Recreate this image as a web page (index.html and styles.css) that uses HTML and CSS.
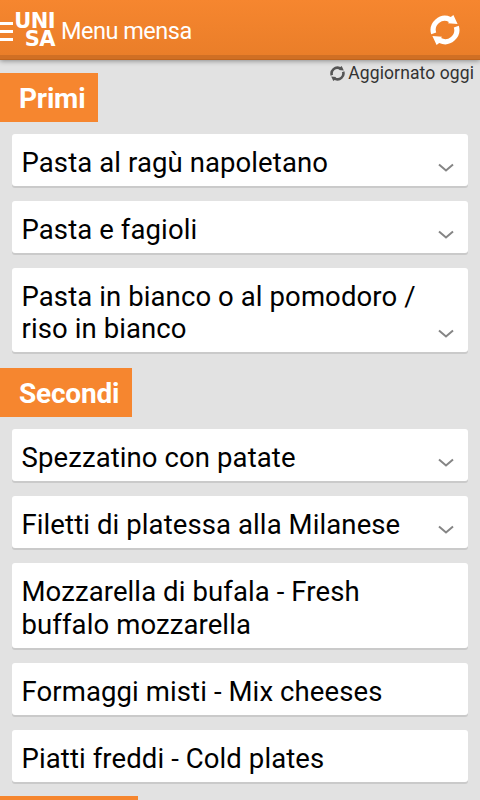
FILE: index.html
```html
<!DOCTYPE html>
<html lang="it">
<head>
<meta charset="utf-8">
<title>Menu mensa</title>
<link rel="stylesheet" href="styles.css">
</head>
<body>
<svg class="defs" aria-hidden="true">
  <symbol id="sync" viewBox="0 0 30 30">
    <path d="M1.2 19.3A14.4 14.4 0 0 1 20.8 2L23.4 0 27.6 9 18 8.2 18.9 6.9A9 9 0 0 0 6.2 17.6Z"/>
    <path d="M28.8 10.7A14.4 14.4 0 0 1 9.2 28L6.6 30 2.4 21 12 21.8 11.1 23.1A9 9 0 0 0 23.8 12.4Z"/>
  </symbol>
  <symbol id="chevron" viewBox="0 0 16 10">
    <path d="M1 1.5 8 7.5 15 1.5" fill="none" stroke="#858585" stroke-width="2"/>
  </symbol>
</svg>
<header class="bar">
  <div class="drawer"><i></i><i></i><i></i></div>
  <div class="logo"><span>UNI</span><span>SA</span></div>
  <h1 class="title">Menu mensa</h1>
  <svg class="refresh"><use href="#sync"/></svg>
</header>
<main class="content">
  <div class="updated"><svg><use href="#sync"/></svg><span>Aggiornato oggi</span></div>
  <h2 class="tag primi"><span>Primi</span></h2>
  <ul class="list">
    <li class="card"><span>Pasta al ragù napoletano</span><svg><use href="#chevron"/></svg></li>
    <li class="card"><span>Pasta e fagioli</span><svg><use href="#chevron"/></svg></li>
    <li class="card"><span>Pasta in bianco o al pomodoro /<br>riso in bianco</span><svg><use href="#chevron"/></svg></li>
  </ul>
  <h2 class="tag secondi"><span>Secondi</span></h2>
  <ul class="list">
    <li class="card"><span>Spezzatino con patate</span><svg><use href="#chevron"/></svg></li>
    <li class="card"><span>Filetti di platessa alla Milanese</span><svg><use href="#chevron"/></svg></li>
    <li class="card"><span>Mozzarella di bufala - Fresh<br>buffalo mozzarella</span></li>
    <li class="card"><span>Formaggi misti - Mix cheeses</span></li>
    <li class="card"><span>Piatti freddi - Cold plates</span></li>
  </ul>
  <div class="tag next"></div>
</main>
</body>
</html>
```
FILE: styles.css
```css
* { box-sizing: border-box; }
body {
  margin: 0;
  height: 800px;
  overflow: hidden;
  display: flex;
  flex-direction: column;
  background: #e2e2e2;
  font-family: Roboto, sans-serif;
  color: #000;
}
.defs { display: none; }
.bar {
  position: relative;
  flex: none;
  height: 60px;
  display: flex;
  align-items: center;
  background: linear-gradient(#f6862f, #ea7e29 55px, #d06f24 55px, #d06f24 59px, #c0631b 59px);
  box-shadow: 0 1px 5px rgba(0, 0, 0, .4);
  color: #fff;
}
.drawer { width: 13px; display: grid; gap: 5px; padding-top: 2px; }
.drawer i { height: 3px; background: #fff; }
.logo {
  width: 43px;
  display: flex;
  flex-direction: column;
  align-items: flex-end;
  padding: 0 1px 1px 0;
  font: bold 21px/18px "DejaVu Sans", sans-serif;
  letter-spacing: -.6px;
}
.title { margin: 2px 0 0 5px; font-size: 23.5px; line-height: 30px; font-weight: 400; letter-spacing: -.5px; white-space: nowrap; }
.refresh { width: 30px; height: 30px; margin-left: auto; margin-right: 20px; fill: #fff; }
.content { flex: 1; min-height: 0; overflow: hidden; }
.updated {
  height: 12.5px;
  padding-right: 6px;
  display: flex;
  justify-content: flex-end;
  gap: 3px;
  font-size: 17.5px;
  line-height: 26px;
  letter-spacing: .1px;
  color: #333;
  white-space: nowrap;
}
.updated svg { width: 15px; height: 15px; margin-top: 6px; fill: #555; }
.tag {
  margin: 0;
  height: 49px;
  padding-left: 19px;
  background: #f6862f;
  color: #fff;
  font-size: 28px;
  line-height: 51px;
  font-weight: 700;
  letter-spacing: -.2px;
}
.primi { width: 98px; }
.secondi { width: 132px; margin-top: 15.3px; }
.next { width: 138px; margin-top: 14.8px; }
.list { list-style: none; margin: 12.7px 12px 0; padding: 0; display: grid; gap: 15px; }
.card {
  display: flex;
  justify-content: space-between;
  align-items: flex-end;
  min-height: 52px;
  padding: 12.8px 14px 6.6px 9.5px;
  border-radius: 3px;
  background: #fff;
  box-shadow: 0 2px 0 #cacaca;
  font-size: 27.5px;
  line-height: 32.4px;
  letter-spacing: .1px;
  white-space: nowrap;
}
.card svg { width: 16px; height: 10px; margin-bottom: 7px; flex: none; }
```
